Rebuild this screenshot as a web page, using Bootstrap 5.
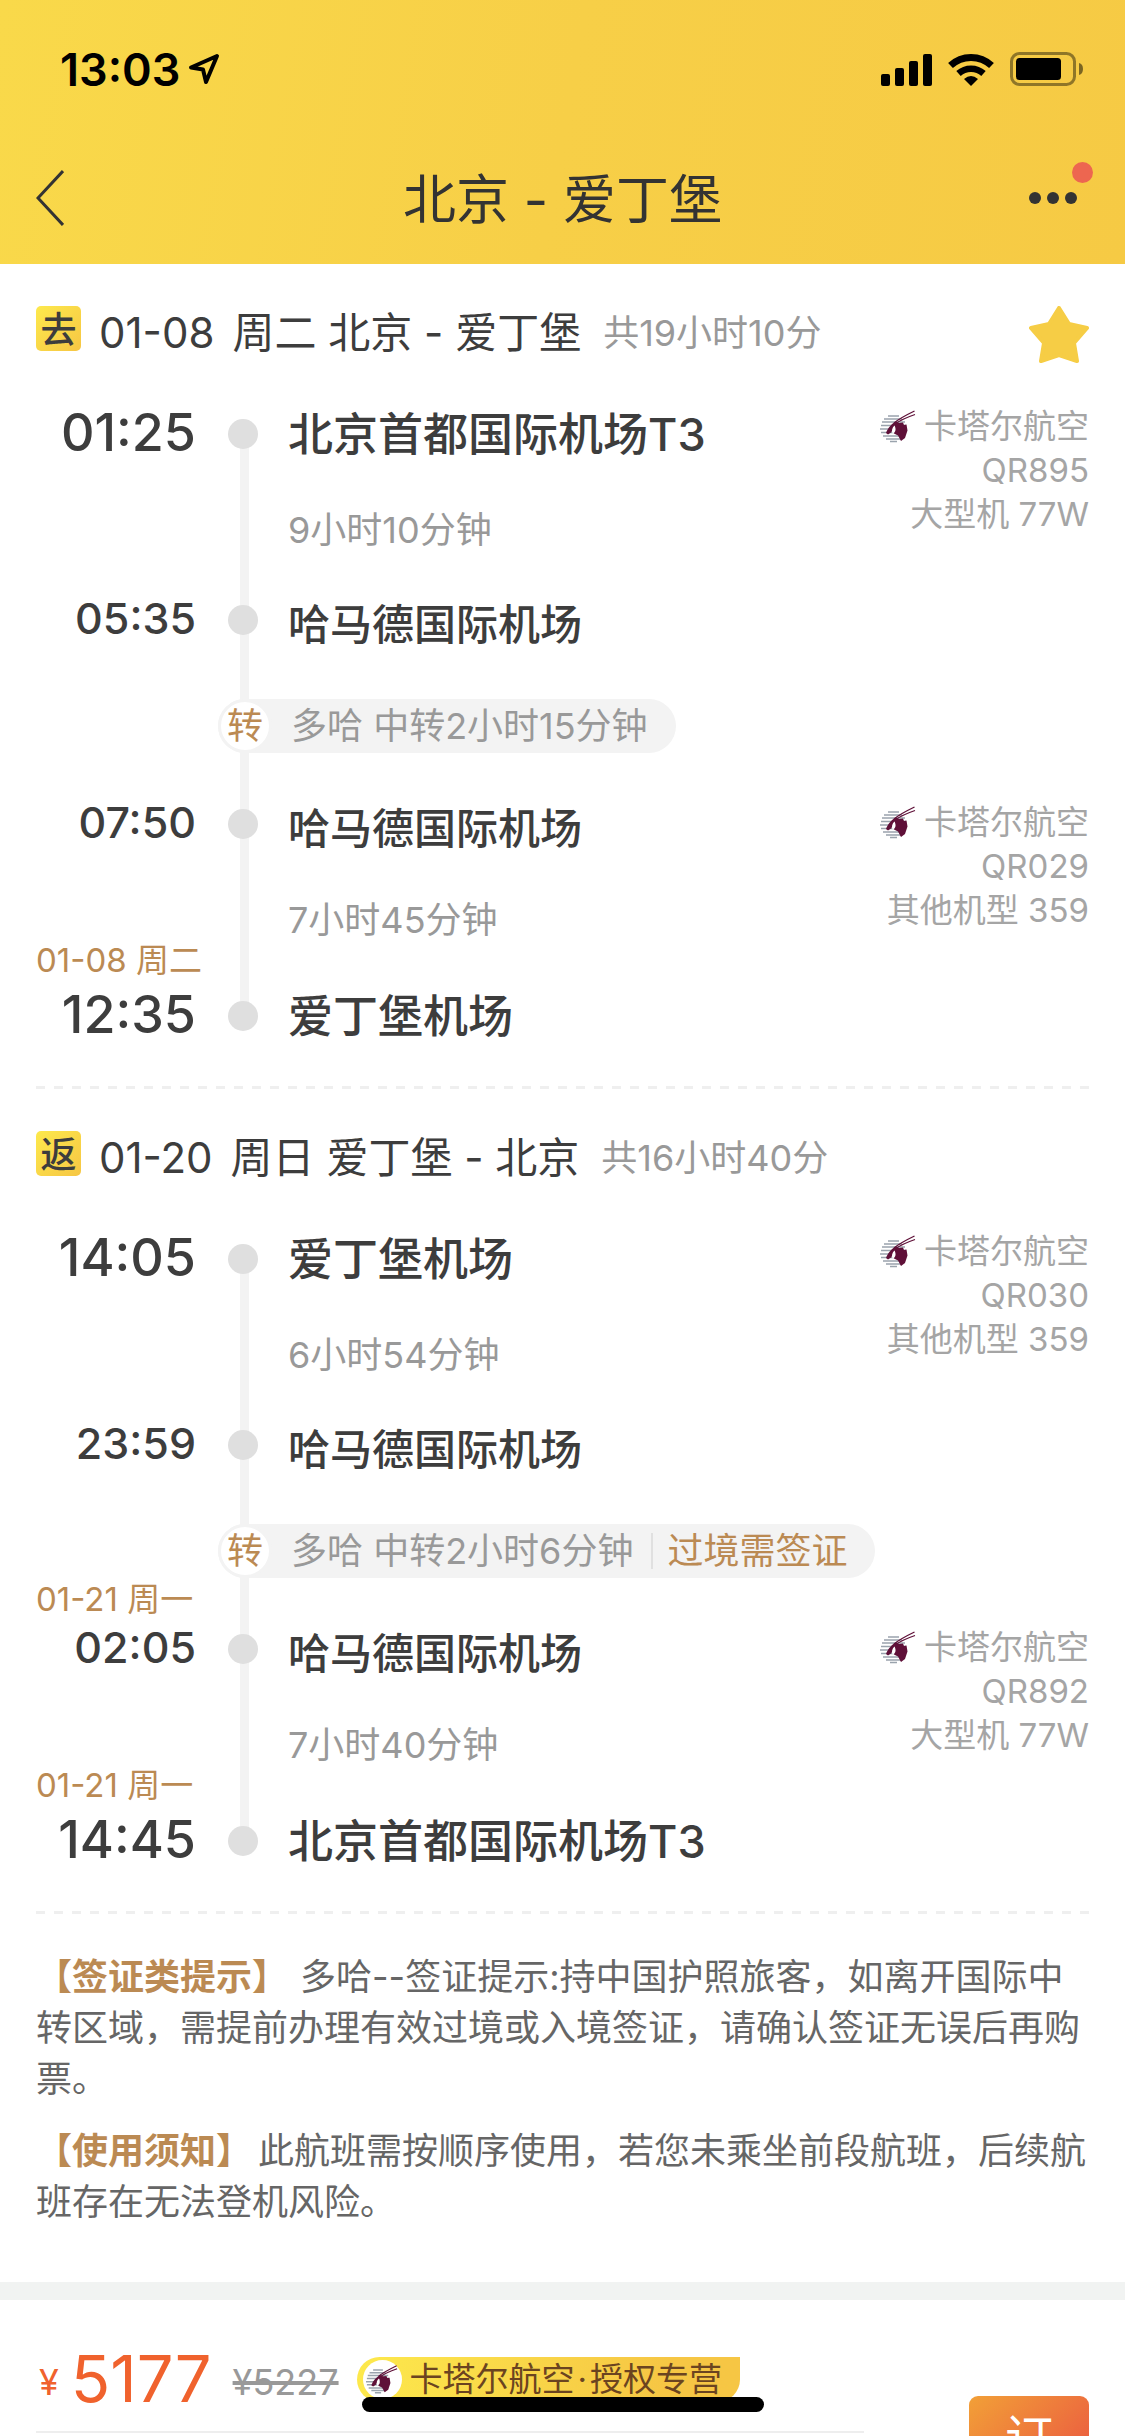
<!DOCTYPE html>
<html lang="zh-CN">
<head>
<meta charset="utf-8">
<meta name="viewport" content="width=device-width, initial-scale=1">
<title>北京 - 爱丁堡</title>
<link href="https://cdn.jsdelivr.net/npm/bootstrap@5.3.0/dist/css/bootstrap.min.css" rel="stylesheet">
<style>
:root{--ink:#3d3d3d;--muted:#999;--gold:#bb8a53;--rail:#f3f3f3}
html,body{height:100%}
body{font-family:Inter,"Noto Sans CJK SC",sans-serif;color:var(--ink);font-size:36px;line-height:51px;background:#fff;overflow:hidden}
button{color:inherit}
svg{display:block;flex:none}
.topbar{background:linear-gradient(100deg,#f9d94a,#f7cf47 50%,#f6ca44)}
.statusbar{height:132px;padding:6px 42px 0 60px;color:#000}
.clock{font-size:45px;font-weight:600}
.navrow{height:132px;padding:0 36px;color:#333}
.page-title{font-size:53px;line-height:60px;font-weight:400;padding-top:3px}
.side{width:90px}
.more-dot{position:absolute;right:-12px;top:-30px;width:21px;height:21px;border-radius:50%;background:#ed6650}
.leg{padding:39px 36px 46px}
.dashed{height:3px;margin:0 36px;background:repeating-linear-gradient(90deg,#efefef 0 9px,transparent 9px 18px)}
.leg-head{height:60px;margin-bottom:41px;font-size:42px;line-height:60px}
.leg-date{margin-right:18px}
.tag{width:45px;height:45px;margin:3px 18px 0 0;border-radius:5px;background:linear-gradient(135deg,#fde94c,#f6c644);font-size:36px;line-height:48px;font-weight:500}
.total{font-size:36px;color:var(--muted);margin-left:22px}
.route{position:relative}
.route::before{content:"";position:absolute;left:204px;top:30px;bottom:24px;width:9px;background:var(--rail)}
.route>*{position:relative}
.stop{height:60px;font-weight:500}
.stop.low,.stop.end{height:48px}
.time{width:160px;margin-right:32px;text-align:right;font-size:52px;flex:none;padding-bottom:3px}
.node{width:30px;height:30px;border-radius:50%;background:#dfdfdf;margin-right:30px;flex:none}
.place{font-size:45px;white-space:nowrap}
.low .time{font-size:43px}
.low .place{font-size:42px;padding-top:8px}
.flytime{height:132px;color:var(--muted)}
.flytime.long{height:144px}
.flytime span{margin-left:60px}
.day{width:192px;flex:none;align-self:flex-end;color:var(--gold);font-size:33px;line-height:40px;margin-bottom:12px}
.change{height:156px;padding-top:55px}
.change .day{margin-bottom:6px}
.pill{height:54px;margin-left:-10px;align-self:flex-start;border-radius:27px;background:var(--rail);color:var(--muted);line-height:54px;padding-right:28px}
.turn{width:54px;height:54px;border-radius:50%;border:3px solid var(--rail);background:#fff;color:var(--gold);line-height:48px;margin-right:19px}
.visa{color:var(--gold);margin-left:18px;padding-left:14px;border-left:2px solid #e0e0e0;line-height:36px}
.flight{color:#a5a5a5;font-size:33px;line-height:44px;text-align:right}
.notes{padding:38px 36px 54px;color:#666}
.notes p{margin-bottom:21px}
.notes strong{font-weight:600;color:var(--gold)}
.notes .wide{margin-right:12px}
.notes .near{margin-right:6px}
.band{height:18px;background:#f1f3f2}
.offer{padding:0 36px}
.fare{height:133px;border-bottom:2px solid #eee;padding-top:27px;width:78.6%}
.cny{color:#f0622d;padding:6px 0 0 3px}
.price{color:#f0622d;font-size:65px;line-height:72px;margin:0 21px 0 12px}
.was{color:var(--muted);padding-top:6px;text-decoration:line-through;text-decoration-thickness:4px}
.brand-tag{height:45px;margin-left:18px;border-radius:24px 0 24px 24px;background:linear-gradient(100deg,#fde94c,#f6c644 80%);color:#6b4420;font-size:33px;line-height:45px;padding:0 18px 0 6px}
.disc{width:39px;height:39px;border-radius:50%;background:#fff;margin-right:8px}
.sep{margin:0 3px}
.book{width:120px;height:126px;margin-top:96px;border-radius:9px;color:#fff;font-size:48px;line-height:84px;background:linear-gradient(135deg,#f2a037,#ea5541 80%)}
.homebar{position:fixed;left:50%;bottom:24px;width:402px;height:15px;margin-left:-201px;border-radius:8px;background:#000}
</style>
<script src="https://cdn.jsdelivr.net/npm/bootstrap@5.3.0/dist/js/bootstrap.bundle.min.js"></script>
</head>
<body>
<svg width="0" height="0" class="position-absolute" aria-hidden="true">
  <symbol id="oryx" viewBox="0 0 36 36">
    <path d="M8 8h11M4 11h18M2 14h23M1 17.500h25M0 21h27M1 24.500h25M3 28h22M6 31h16M10 33.500h7" stroke="#9aa3ad" stroke-width="1.700" fill="none"/>
    <path d="M14 15Q20 10 34.500 3M16 15.500Q22 11 35 6.500" stroke="#5f1038" stroke-width="1.300" fill="none"/>
    <path d="M16 13.500c-4 2-8 6-10 11.500l2 1.500 3-2c2-2 2-5 4-7l-1 8 4 2 3 5.500 4-3 2.500-7.500-1-6-2.500.5-1-2.500-4 .5z" fill="#5f1038"/>
    <path d="M14.500 17.500c-2.500 2-3 5-2 8 3-1 4-4 2-8z" fill="#fff"/>
  </symbol>
</svg>

<header class="topbar">
  <div class="statusbar d-flex align-items-center">
    <span class="clock">13:03</span>
    <svg class="ms-2" width="32" height="32" viewBox="0 0 32 32" fill="none" stroke="#000" stroke-width="4" stroke-linejoin="round"><path d="M29 3L3 14.500 15 16.500 18 29z"/></svg>
    <svg class="ms-auto" width="51" height="33" viewBox="0 0 51 33"><rect y="21" width="9" height="12" rx="2"/><rect x="14" y="15" width="9" height="18" rx="2"/><rect x="28" y="8" width="9" height="25" rx="2"/><rect x="42" y="1" width="9" height="32" rx="2"/></svg>
    <svg class="mx-3" width="46" height="33" viewBox="0 0 46 33"><path d="M2.500 12.500a30 30 0 0 1 41 0" fill="none" stroke="#000" stroke-width="7"/><path d="M10.500 20.500a18.500 18.500 0 0 1 25 0" fill="none" stroke="#000" stroke-width="6.500"/><path d="M16 26q7-6 14 0l-7 7z"/></svg>
    <svg width="73" height="34" viewBox="0 0 73 34"><rect x="1.500" y="1.500" width="63" height="31" rx="8" fill="none" stroke="#000" stroke-opacity=".42" stroke-width="3"/><rect x="6" y="6" width="45" height="22" rx="3.500"/><path d="M69 11q4 1 4 6t-4 6z" fill-opacity=".5"/></svg>
  </div>
  <nav class="navrow d-flex align-items-center justify-content-between">
    <button type="button" class="side border-0 bg-transparent p-0" aria-label="返回"><svg width="28" height="56" viewBox="0 0 28 56" fill="none" stroke="#333" stroke-width="3"><path d="M27 1L2 28l25 27"/></svg></button>
    <h1 class="page-title mb-0">北京 - 爱丁堡</h1>
    <button type="button" class="side border-0 bg-transparent p-0 d-flex justify-content-end" aria-label="更多">
      <span class="position-relative me-2 pe-1"><svg width="48" height="12" viewBox="0 0 48 12" fill="#333"><circle cx="6" cy="6" r="6"/><circle cx="24" cy="6" r="6"/><circle cx="42" cy="6" r="6"/></svg><span class="more-dot"></span></span>
    </button>
  </nav>
</header>

<main>
  <section class="leg">
    <div class="leg-head d-flex">
      <span class="tag text-center">去</span><span class="leg-date">01-08</span><span>周二 北京 - 爱丁堡</span><span class="total">共19小时10分</span>
      <button type="button" class="ms-auto border-0 bg-transparent p-0 d-flex align-items-end" aria-label="收藏"><svg width="60" height="57" viewBox="0 0 60 57"><path d="M30 2l10 16 18 4-13 15 3 18-18-6-18 6 3-18L2 22l18-4z" fill="#f6cd45" stroke="#f6cd45" stroke-width="4" stroke-linejoin="round"/></svg></button>
    </div>
    <div class="route">
      <div class="d-flex justify-content-between">
        <div>
          <div class="stop d-flex align-items-center"><span class="time">01:25</span><i class="node"></i><span class="place">北京首都国际机场T3</span></div>
          <div class="flytime d-flex align-items-center"><div class="day"></div><span>9小时10分钟</span></div>
          <div class="stop low d-flex align-items-center"><span class="time">05:35</span><i class="node"></i><span class="place">哈马德国际机场</span></div>
        </div>
        <div class="flight"><div class="d-flex align-items-center justify-content-end"><svg class="me-2" width="36" height="36"><use href="#oryx"/></svg><span>卡塔尔航空</span></div><div>QR895</div><div>大型机 77W</div></div>
      </div>
      <div class="change d-flex"><div class="day"></div><div class="pill d-flex"><span class="turn text-center">转</span><span>多哈 中转2小时15分钟</span></div></div>
      <div class="d-flex justify-content-between">
        <div>
          <div class="stop low d-flex align-items-center"><span class="time">07:50</span><i class="node"></i><span class="place">哈马德国际机场</span></div>
          <div class="flytime long d-flex align-items-center"><div class="day">01-08 周二</div><span>7小时45分钟</span></div>
          <div class="stop end d-flex align-items-center"><span class="time">12:35</span><i class="node"></i><span class="place">爱丁堡机场</span></div>
        </div>
        <div class="flight"><div class="d-flex align-items-center justify-content-end"><svg class="me-2" width="36" height="36"><use href="#oryx"/></svg><span>卡塔尔航空</span></div><div>QR029</div><div>其他机型 359</div></div>
      </div>
    </div>
  </section>
  <div class="dashed"></div>

  <section class="leg">
    <div class="leg-head d-flex">
      <span class="tag text-center">返</span><span class="leg-date">01-20</span><span>周日 爱丁堡 - 北京</span><span class="total">共16小时40分</span>
    </div>
    <div class="route">
      <div class="d-flex justify-content-between">
        <div>
          <div class="stop d-flex align-items-center"><span class="time">14:05</span><i class="node"></i><span class="place">爱丁堡机场</span></div>
          <div class="flytime d-flex align-items-center"><div class="day"></div><span>6小时54分钟</span></div>
          <div class="stop low d-flex align-items-center"><span class="time">23:59</span><i class="node"></i><span class="place">哈马德国际机场</span></div>
        </div>
        <div class="flight"><div class="d-flex align-items-center justify-content-end"><svg class="me-2" width="36" height="36"><use href="#oryx"/></svg><span>卡塔尔航空</span></div><div>QR030</div><div>其他机型 359</div></div>
      </div>
      <div class="change d-flex"><div class="day">01-21 周一</div><div class="pill d-flex"><span class="turn text-center">转</span><span>多哈 中转2小时6分钟</span><span class="visa align-self-center">过境需签证</span></div></div>
      <div class="d-flex justify-content-between">
        <div>
          <div class="stop low d-flex align-items-center"><span class="time">02:05</span><i class="node"></i><span class="place">哈马德国际机场</span></div>
          <div class="flytime long d-flex align-items-center"><div class="day">01-21 周一</div><span>7小时40分钟</span></div>
          <div class="stop end d-flex align-items-center"><span class="time">14:45</span><i class="node"></i><span class="place">北京首都国际机场T3</span></div>
        </div>
        <div class="flight"><div class="d-flex align-items-center justify-content-end"><svg class="me-2" width="36" height="36"><use href="#oryx"/></svg><span>卡塔尔航空</span></div><div>QR892</div><div>大型机 77W</div></div>
      </div>
    </div>
  </section>
  <div class="dashed"></div>

  <section class="notes">
    <p><strong class="wide">【签证类提示】</strong>多哈--签证提示:持中国护照旅客，如离开国际中转区域，需提前办理有效过境或入境签证，请确认签证无误后再购票。</p>
    <p class="mb-0"><strong class="near">【使用须知】</strong>此航班需按顺序使用，若您未乘坐前段航班，后续航班存在无法登机风险。</p>
  </section>
  <div class="band"></div>

  <section class="offer d-flex justify-content-between">
    <div class="fare d-flex align-items-center">
      <span class="cny">¥</span><span class="price">5177</span><del class="was">¥5227</del>
      <span class="brand-tag d-flex align-items-center"><span class="disc d-flex align-items-center justify-content-center"><svg width="32" height="32"><use href="#oryx"/></svg></span><span>卡塔尔航空<span class="sep">·</span>授权专营</span></span>
    </div>
    <button type="button" class="book border-0 p-0 d-flex justify-content-center">订</button>
  </section>
</main>
<div class="homebar"></div>
</body>
</html>
